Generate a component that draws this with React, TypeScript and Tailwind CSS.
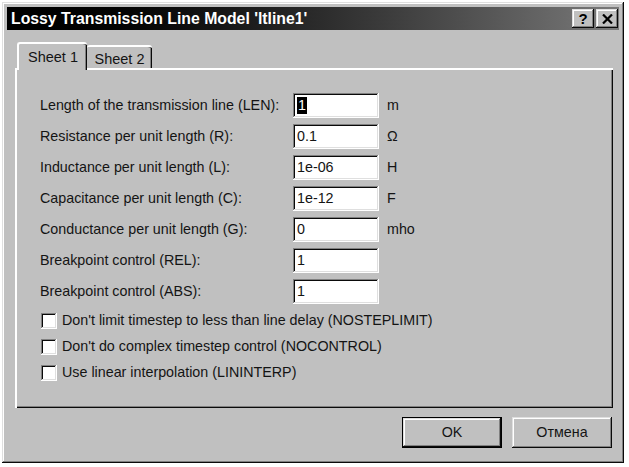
import React from "react";

const raised =
  "shadow-[inset_-1px_-1px_#0a0a0a,inset_1px_1px_#dfdfdf,inset_-2px_-2px_#808080,inset_2px_2px_#ffffff]";
const sunken =
  "shadow-[inset_-1px_-1px_#ffffff,inset_1px_1px_#808080,inset_-2px_-2px_#dfdfdf,inset_2px_2px_#0a0a0a]";

const rows: { label: string; value: string; unit?: string; selected?: boolean }[] = [
  { label: "Length of the transmission line (LEN):", value: "1", unit: "m", selected: true },
  { label: "Resistance per unit length (R):", value: "0.1", unit: "Ω" },
  { label: "Inductance per unit length (L):", value: "1e-06", unit: "H" },
  { label: "Capacitance per unit length (C):", value: "1e-12", unit: "F" },
  { label: "Conductance per unit length (G):", value: "0", unit: "mho" },
  { label: "Breakpoint control (REL):", value: "1" },
  { label: "Breakpoint control (ABS):", value: "1" },
];

const checks = [
  "Don't limit timestep to less than line delay (NOSTEPLIMIT)",
  "Don't do complex timestep control (NOCONTROL)",
  "Use linear interpolation (LININTERP)",
];

export default function App() {
  return (
    <div
      className="min-h-[467px] bg-white pt-[2px] pl-[2px] text-[#141414]"
      style={{ fontFamily: '"Liberation Sans", Arial, sans-serif' }}
    >
      <div className={`w-[622px] h-[461px] bg-[#c0c0c0] p-[5px] flex flex-col ${raised}`}>
        {/* Title bar */}
        <div className="h-[23px] flex items-center justify-between pl-[4px] pr-[1px] bg-gradient-to-r from-[#000000] via-[#2a2a2a] to-[#7a7a7a]">
          <span className="text-white font-bold text-[15.8px] leading-none">
            Lossy Transmission Line Model 'ltline1'
          </span>
          <div className="flex gap-[2px]">
            <div className={`w-[22px] h-[19px] bg-[#c0c0c0] flex items-center justify-center ${raised}`}>
              <span className="font-bold text-[15px] leading-none text-black">?</span>
            </div>
            <div className={`w-[22px] h-[19px] bg-[#c0c0c0] flex items-center justify-center ${raised}`}>
              <svg width="11" height="10" viewBox="0 0 11 10">
                <path d="M1 0.5 L10 9.5 M10 0.5 L1 9.5" stroke="#000" strokeWidth="2.2" />
              </svg>
            </div>
          </div>
        </div>

        {/* Tabs + panel */}
        <div className="pl-[8px] pt-[12px]">
          <div className="flex items-end h-[26px] pl-[2px] relative z-10">
            <div className="w-[70px] h-[28px] -mb-[2px] bg-[#c0c0c0] rounded-t-[3px] border-t-2 border-l-2 border-white shadow-[inset_-1px_0_#0a0a0a,inset_-2px_0_#808080] flex items-start justify-center pt-[6px] text-[14.5px] leading-none">
              Sheet 1
            </div>
            <div className="w-[65px] h-[23px] bg-[#c0c0c0] rounded-t-[3px] border-t-2 border-white shadow-[inset_-1px_0_#0a0a0a,inset_-2px_0_#808080] flex items-start justify-center pt-[5px] text-[14.5px] leading-none">
              Sheet 2
            </div>
          </div>
          <div className="w-[598px] h-[340px] shadow-[inset_2px_2px_#ffffff,inset_-1px_-1px_#0a0a0a,inset_-2px_-2px_#808080] pt-[25px] pl-[25px]">
            <div className="flex flex-col gap-[6px]">
              {rows.map((r) => (
                <div key={r.label} className="flex items-center h-[25px] text-[14.3px]">
                  <div className="w-[253px]">{r.label}</div>
                  <div className={`w-[86px] h-[25px] bg-white flex items-center pl-[4px] ${sunken}`}>
                    {r.selected ? (
                      <span className="bg-black text-white px-[1px] leading-[17px]">{r.value}</span>
                    ) : (
                      <span>{r.value}</span>
                    )}
                  </div>
                  {r.unit && <div className="ml-[8px]">{r.unit}</div>}
                </div>
              ))}
            </div>
            <div className="flex flex-col gap-[10px] mt-[9px]">
              {checks.map((c) => (
                <div key={c} className="flex items-center h-[16px] text-[14.3px]">
                  <div className={`ml-[1px] w-[16px] h-[16px] bg-white ${sunken}`} />
                  <span className="ml-[5px]">{c}</span>
                </div>
              ))}
            </div>
          </div>
          <div className="w-[598px] flex justify-end gap-[10px] mt-[9px] pr-[1px]">
            <div className="w-[100px] h-[31px] border border-black">
              <div className={`w-full h-full flex items-center justify-center text-[14.3px] ${raised}`}>OK</div>
            </div>
            <div className={`w-[100px] h-[31px] flex items-center justify-center text-[14.3px] ${raised}`}>
              Отмена
            </div>
          </div>
        </div>
      </div>
    </div>
  );
}
